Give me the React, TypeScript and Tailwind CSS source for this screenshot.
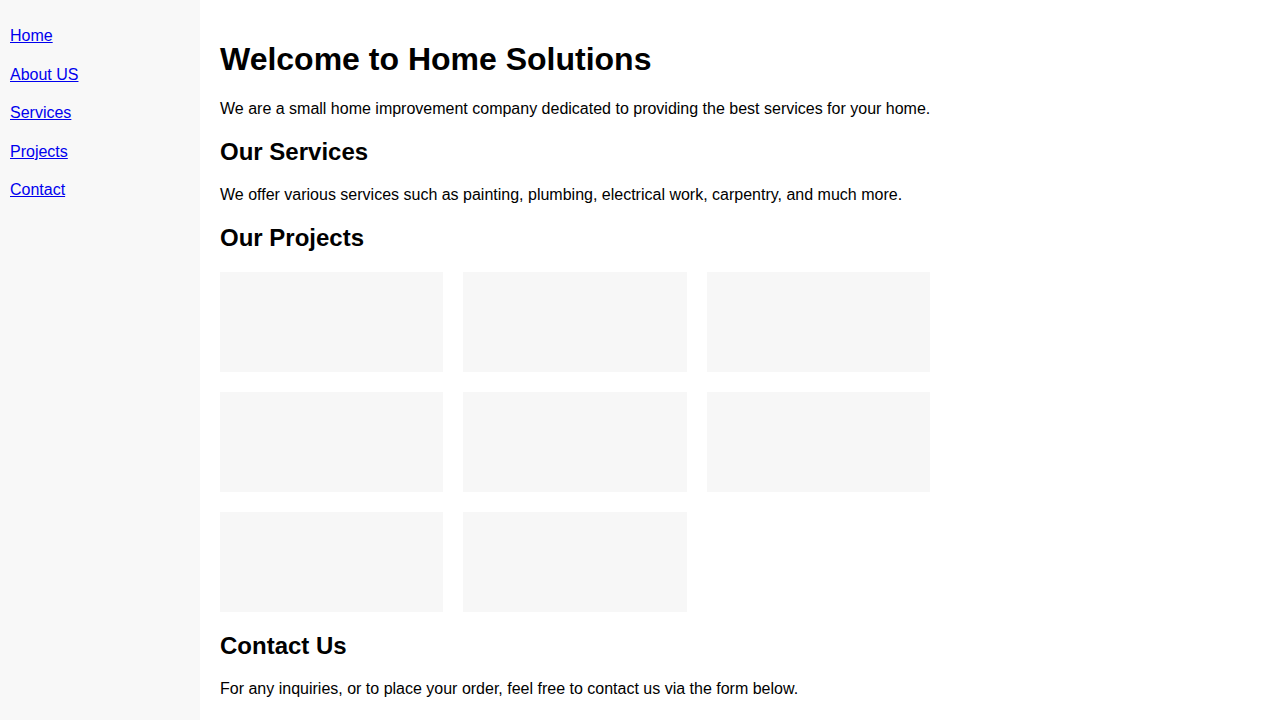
const links = ["Home", "About US", "Services", "Projects", "Contact"];
const projects = [1, 2, 3, 4, 5, 6, 7, 8];

export default function App() {
  return (
    <div className="flex min-h-screen w-full bg-white font-['Liberation_Sans',Arial,sans-serif] text-base leading-[normal] text-black">
      <nav className="w-[200px] shrink-0 bg-[#f8f8f8]">
        <ul className="mt-[17px]">
          {links.map((l) => (
            <li key={l} className="p-[10px] leading-[18.5px]">
              <a href="#" className="text-[#0000ee] underline">
                {l}
              </a>
            </li>
          ))}
        </ul>
      </nav>
      <main className="flex-1 p-5">
        <h1 className="my-[21.44px] text-[32px] font-bold leading-[37px]">
          Welcome to Home Solutions
        </h1>
        <p className="my-4">
          We are a small home improvement company dedicated to providing the best services for your home.
        </p>
        <h2 className="my-[19.92px] text-2xl font-bold leading-[28px]">Our Services</h2>
        <p className="my-4">
          We offer various services such as painting, plumbing, electrical work, carpentry, and much more.
        </p>
        <h2 className="my-[19.92px] text-2xl font-bold leading-[28px]">Our Projects</h2>
        <div className="my-5 grid w-[710px] grid-cols-3 gap-5">
          {projects.map((p) => (
            <div key={p} className="h-[100px] bg-[#f7f7f7]" />
          ))}
        </div>
        <h2 className="my-[19.92px] text-2xl font-bold leading-[28px]">Contact Us</h2>
        <p className="my-4">
          For any inquiries, or to place your order, feel free to contact us via the form below.
        </p>
      </main>
    </div>
  );
}
